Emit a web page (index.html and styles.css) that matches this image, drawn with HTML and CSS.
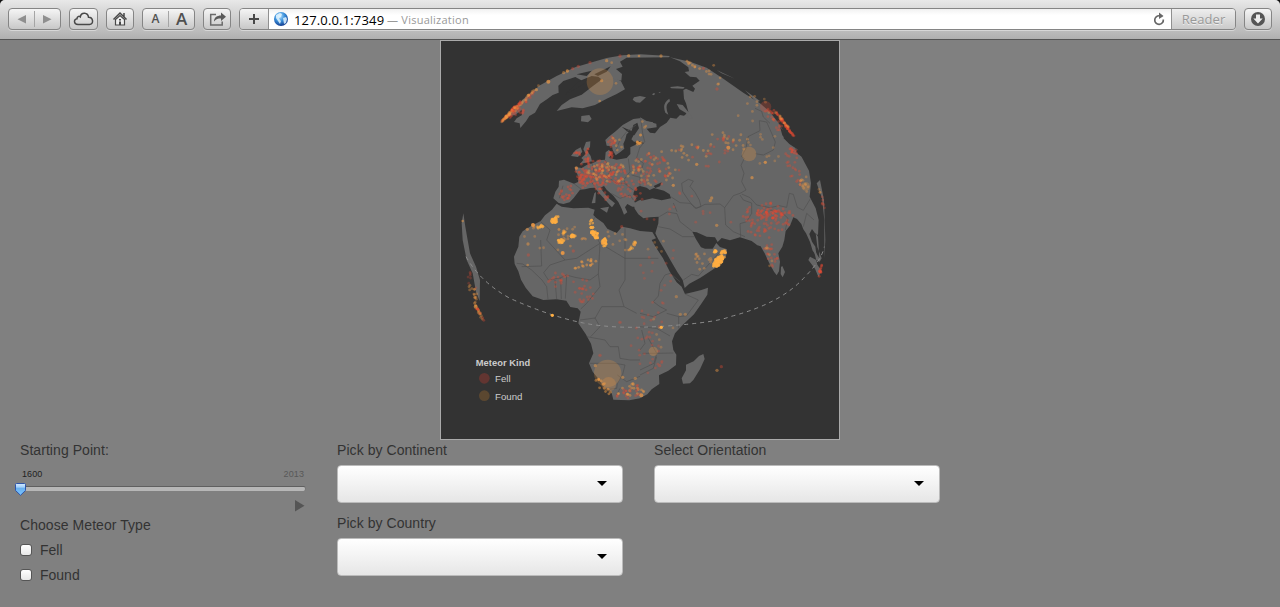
FILE: index.html
```html
<!DOCTYPE html>
<html lang="en">
<head>
<meta charset="utf-8">
<title>Visualization</title>
<link rel="stylesheet" href="styles.css">
</head>
<body>
<header class="toolbar">
  <div class="btn nav">
    <svg width="51" height="20" viewBox="0 0 51 20"><path d="M17 6v8.500L8.500 10.200z M34 6v8.500L42.500 10.200z" fill="#8f8f8f"/><path d="M25.500 2v16" stroke="#a5a5a5"/></svg>
  </div>
  <div class="btn cloud">
    <svg width="27" height="20" viewBox="0 0 27 20"><path d="M8 15.500C3.500 15.500 3.500 10 7 9.700C7 7.500 9 6.800 10.300 7.800C11.300 2.800 18 3.300 18.500 8.300C23.500 8.300 24 15.500 19.500 15.500Z" fill="none" stroke="#484848" stroke-width="1.500"/></svg>
  </div>
  <div class="btn home">
    <svg width="26" height="20" viewBox="0 0 26 20"><path d="M6.500 10.500L13 4l6.500 6.500M17 4v4" fill="none" stroke="#484848" stroke-width="1.500"/><path d="M8.500 10.500v5.500h9v-5.500L13 6.500z" fill="#eee" stroke="#484848" stroke-width="1.200"/><path d="M12 10h2v1.500h-2z M12 12.500h2v3.500h-2z" fill="#484848"/></svg>
  </div>
  <div class="btn text-size"><span class="small-a">A</span><span class="large-a">A</span></div>
  <div class="btn share">
    <svg width="26" height="20" viewBox="0 0 26 20"><path d="M12 5.500H6.700v10.500h11.500V12.500" fill="none" stroke="#6a6a6a" stroke-width="1.500"/><path d="M10 12.500C10 8.500 13 6.500 17 6.500V3.500l5 4.200-5 4.300V9.500C14 9.500 12 10 10 12.500z" fill="#5a5a5a"/></svg>
  </div>
  <div class="address">
    <div class="add"><svg width="15" height="20" viewBox="0 0 15 20"><path d="M7 5v10M2 10h10" stroke="#484848" stroke-width="2"/></svg></div>
    <div class="url">
      <svg class="globe-icon" width="16" height="16" viewBox="0 0 16 16"><defs><radialGradient id="gl" cx=".4" cy=".3" r=".7"><stop offset="0" stop-color="#bde5ff"/><stop offset=".5" stop-color="#3c92dc"/><stop offset="1" stop-color="#123e92"/></radialGradient></defs><circle cx="8" cy="8" r="7" fill="url(#gl)"/><path d="M3 4l4-2 2 1-1 3-2 1 1 2 1 1-1 3-2-3-2-3z M10 7l3-1 1 2-1 4-2 1z" fill="#e2f5ff" opacity=".85"/></svg>
      <span class="host">127.0.0.1:7349</span><span class="page-title">— Visualization</span>
      <svg class="reload" width="14" height="14" viewBox="0 0 14 14"><path d="M10.300 4.500L7.500 3.800A4.300 4.300 0 1 0 11.300 7.500" fill="none" stroke="#666" stroke-width="1.700"/><path d="M7 .5l4.500 3.500L7 7z" fill="#666"/></svg>
    </div>
    <div class="reader">Reader</div>
  </div>
  <div class="btn download">
    <svg width="26" height="20" viewBox="0 0 26 20"><circle cx="13" cy="10" r="7" fill="#555"/><path d="M11 5.500h4v4h2.700L13 14.500 8.300 9.500H11z" fill="#eee"/></svg>
  </div>
</header>
<main>
  <section class="map">
    <svg width="400" height="400" viewBox="0 0 1200 1200">
      <g class="land">
        <path d="M340 475L346 455 356 440 357 422 372 419 402 431 414 426 416 410 406 392 404 381 425 384 440 375 458 370 475 361 495 359 497 337 507 329 514 340 508 354 530 359 560 354 571 342 571 322 590 313 613 310 600 304 582 305 574 298 586 277 591 267 575 272 560 282 556 298 550 312 553 326 540 337 527 346 518 330 516 319 500 317 496 300 506 290 527 274 548 255 580 237 604 234 621 244 649 251 650 262 620 266 630 278 645 280 660 261 680 248 691 233 709 236 720 225 732 227 745 216 738 190 732 176 730 150 738 146 760 156 765 146 757 137 779 122 769 112 750 110 734 96 747 94 745 82 720 64 690 52 750 65 800 83 850 116 910 158 960 190 990 216 1015 248 1033 278 1031 295 1048 312 1072 328 1087 355 1107 392 1113 430 1109 470 1127 505 1136 540 1134 585 1124 578 1116 567 1108 582 1116 605 1126 620 1130 648 1118 632 1110 606 1098 580 1090 568 1084 552 1071 537 1060 532 1050 557 1037 573 1033 600 1027 620 1015 640 1020 665 1017 694 1010 706 1002 695 988 670 974 640 962 619 952 616 935 603 900 592 870 601 845 594 833 606 825 592 800 590 770 577 757 575 768 598 783 622 795 626 818 626 829 609 840 621 861 628 859 645 846 670 820 688 780 714 748 731 734 744 728 720 712 696 694 665 674 630 654 596 646 580 655 550 656 530 630 532 610 535 595 523 584 506 581 490 598 481 622 475 590 472 583 484 590 500 577 500 562 492 555 502 562 517 552 524 545 506 535 486 520 467 500 449 492 438 481 443 493 460 508 476 525 490 516 502 510 496 494 478 477 459 465 443 450 444 435 448 420 449 412 460 401 474 389 487 370 492 356 489Z"/>
        <path d="M350 491L365 500 400 505 445 503 464 509 460 525 468 533 490 549 502 566 530 579 546 560 570 565 600 573 637 576 648 595 635 600 647 621 669 655 690 696 710 727 725 740 735 762 760 756 784 750 804 743 802 764 785 790 762 823 728 855 705 880 696 904 700 930 709 944 708 975 685 992 657 1006 658 1032 635 1048 622 1063 600 1075 568 1081 520 1079 514 1055 490 1039 476 1018 458 995 447 970 460 940 453 911 437 882 415 850 422 815 413 805 391 801 379 782 350 778 310 780 278 769 257 743 243 719 235 694 224 672 222 650 235 620 238 590 248 574 272 559 302 543 315 526 336 509Z"/>
        <path d="M790 942L794 957 780 988 760 1020 750 1030 729 1031 725 1015 738 991 738 974 761 964 777 948Z M407 330L422 322 427 335 414 351 393 348 400 338Z M438 306L451 304 450 322 440 330 452 348 456 364 420 372 430 360 424 354 437 342 430 328Z M463 460L468 456 466 489 455 490Z M480 505L507 500 501 518Z M424 228L448 225 455 237 444 247 423 244Z M582 172L600 168 618 172 600 188 588 187 578 179Z M350 213L365 195 390 178 425 164 455 141 480 122 515 106 543 124 555 148 530 162 500 176 465 195 428 205 395 202Z M1140 420L1130 430 1146 475 1153 540 1153 655 1156 600 1152 480Z M1111 600L1118 620 1138 655 1134 590 1127 579 1132 621 1145 655 1139 665 1110 650 1105 660 1125 686 1135 710 1145 693 1132 674 1125 645Z M1027 678L1035 696 1028 712 1022 702 1023 681Z"/>
        <path d="M180 250L205 224 250 177 300 136 350 108 405 82 500 54 548 46 600 43 690 48 686 52 560 53 540 65 548 80 528 87 546 102 544 122 520 116 490 123 475 110 455 108 424 121 406 111 370 123 355 137 356 158 338 165 322 177 300 192 285 218 268 228 258 244 241 264 239 250 222 246 230 235 246 225 245 210 225 225 210 228Z"/>
        <path d="M676 218Q665 190 688 176L690 184Q672 195 685 224Z M710 192L728 195 750 222 758 235 745 234 738 219 719 208Z M600 230L612 242 640 247 632 255 607 245Z M690 141L713 139 734 142 730 146 694 145Z M830 90L885 116 845 100Z M915 151L960 183 950 187Z M636 163L642 159 646 162 640 166Z M655 158L662 155 660 159Z M70 520L76 560 90 640 108 680 120 720 119 783 108 755 98 700 80 660 68 600 65 550Z"/>
      </g>
      <g class="sea">
        <path d="M580 465Q582 442 600 438L620 443 629 450 642 444 672 452 689 463 693 475 665 481 637 475 605 482Z M641 438L665 427 660 439 646 444Z M545 260L575 273 580 255 592 248 597 265 583 286 566 278Z M391 148L412 127 445 115 430 133 375 165Z M463 103L512 79 500 95 474 108Z M410 103L455 92 440 108Z M1020 260L1042 286 1040 302 1027 286Z M1065 325L1080 336 1085 350 1070 339Z"/>
      </g>
      <g class="borders">
        <path d="M402 431L424 448M369 437L358 475M457 372L463 400 453 425 467 442M495 360L512 390 502 410 530 430 553 430 580 450M565 356L570 395 551 420 565 440M575 405L600 412 600 438M514 460L540 475 570 465 580 480M600 320L590 353 610 370 602 400M528 330L540 300 560 275 588 255M602 236L608 280 614 305 600 323M725 430L745 418 760 423 750 439 765 457 778 480 783 500 765 505 745 480 728 455 725 430M692 470L720 488 750 490 770 505 795 493 840 492 854 503 880 467 900 460 918 450 905 425 912 400 903 376 913 355 905 350 918 325 924 290 960 272 958 242 980 246 995 280 1006 306 1000 330 970 345 946 341M945 205L965 214 970 231 990 250M905 462L930 473 950 495 990 503 1018 497 1040 502 1048 460 1060 463 1072 502 1090 511 1112 475M854 503L857 555 880 575 915 590M900 465L910 480 935 489 935 520 920 545 900 551 902 591M658 530L682 516 711 521 720 545 757 574M711 515L700 489M655 560L690 567 728 590 765 590M1036 570L1044 535 1025 517 990 510M1090 560L1100 520 1122 540M730 720L755 703 775 708 800 680 840 635"/>
        <path d="M302 545L330 570 320 600 375 660 410 655 480 610 555 655V565M464 532L450 560 480 610M555 655V720L537 750 552 800 590 820M302 600L305 678 245 680M555 655H655M230 670L248 672 275 690 306 720 320 740 324 778M375 660L330 675 311 698 325 720 360 714 380 705 405 712 450 720 475 702 480 610M345 720L350 778M362 715L364 778M380 708L376 776M475 702L480 740 440 790 422 807M420 840L465 834 480 860 452 890M465 835L485 800 552 800M440 890L495 900 510 920 535 920 540 955 570 960 600 960M450 970L525 970 555 975 548 1003 532 1030 530 1045 505 1048M532 1005L560 1025 600 1009M600 820L640 830 680 810 660 800 640 785 655 768 660 730 675 705M680 820L716 830 716 865M716 830L740 827 775 780 735 762M600 860L650 865 690 888M605 870L615 910 600 930M608 940L650 940 700 939M625 895L650 940 642 970 600 990M600 1005L640 985 650 950M540 1045L530 1065M675 705L690 700 720 725"/>
      </g>
      <path class="equator" d="M78 650Q122 727 210 775Q330 829 430 849T680 858 870 830Q1025 790 1095 710Q1145 660 1153 620"/>
      <g id="meteors"></g>
      <g class="legend">
        <text class="legend-title" x="107" y="978">Meteor Kind</text>
        <circle class="fell" cx="133" cy="1015" r="16"/><text x="165" y="1025">Fell</text>
        <circle class="found" cx="133" cy="1067" r="16"/><text x="165" y="1080">Found</text>
      </g>
    </svg>
  </section>
  <section class="controls">
    <div class="col">
      <label>Starting Point:</label>
      <div class="slider">
        <div class="range"><span class="from">1600</span><span>2013</span></div>
        <div class="track"><svg class="thumb" width="11" height="13" viewBox="0 0 11 13"><defs><linearGradient id="th" x2="0" y2="1"><stop offset="0" stop-color="#d4ebff"/><stop offset=".3" stop-color="#a5d0fa"/><stop offset=".4" stop-color="#68b0f0"/><stop offset="1" stop-color="#7cc5ff"/></linearGradient></defs><path d="M.5 1.500Q.5.5 1.500.5h8Q10.500.5 10.500 1.500V7.500L5.500 12.300.5 7.500z" fill="url(#th)" stroke="#2f55a8"/></svg></div>
        <svg class="play" width="10" height="12" viewBox="0 0 10 12"><path d="M0 0v11.500L9.500 5.700z"/></svg>
      </div>
      <label>Choose Meteor Type</label>
      <div class="check"><i></i><span>Fell</span></div>
      <div class="check"><i></i><span>Found</span></div>
    </div>
    <div class="col">
      <label>Pick by Continent</label><div class="select"></div>
      <label>Pick by Country</label><div class="select"></div>
    </div>
    <div class="col">
      <label>Select Orientation</label><div class="select"></div>
    </div>
  </section>
</main>
<script src="map.js"></script>
</body>
</html>
```

FILE: styles.css
```css
* { box-sizing: border-box; }
body {
  margin: 0;
  height: 607px;
  overflow: hidden;
  background: #808080;
  color: #333;
  font: 14px/20px "Liberation Sans", Arial, sans-serif;
}
svg { display: block; }
.toolbar {
  display: flex;
  height: 40px;
  padding: 8px 8px 0;
  border-bottom: 1px solid #555;
  border-radius: 5px 5px 0 0;
  background: linear-gradient(#e8e8e8, #cfcfcf 45%, #b0b0b0);
  box-shadow: 0 -6px 0 6px #111;
  clip-path: inset(0);
}
.btn, .address { height: 22px; border: 1px solid #858585; border-radius: 4px; box-shadow: 0 1px 0 rgba(255,255,255,.4); }
.btn { background: linear-gradient(#f5f5f5, #c8c8c8); overflow: hidden; }
.nav { width: 53px; margin-right: 8px; }
.cloud { width: 29px; margin-right: 8px; }
.home { width: 28px; margin-right: 8px; }
.text-size { display: flex; width: 53px; margin-right: 8px; color: #505050; font-family: "Open Sans", sans-serif; font-weight: 600; text-align: center; }
.text-size span { flex: 1; }
.small-a { font-size: 12px; border-right: 1px solid #a5a5a5; height: 16px; margin-top: 2px; line-height: 16px; }
.large-a { font-size: 17px; line-height: 20px; }
.share { width: 28px; margin-right: 8px; }
.address { display: flex; width: 997px; margin-right: 8px; overflow: hidden; font-family: "Open Sans", "Noto Sans", sans-serif; }
.add { width: 29px; padding-left: 7px; border-right: 1px solid #909090; background: linear-gradient(#f5f5f5, #c8c8c8); }
.url { display: flex; flex: 1; align-items: center; padding: 0 5px 0 4px; background: linear-gradient(#f1f1f1, #fff 30%); }
.host { margin-left: 5px; color: #000; font-size: 13px; letter-spacing: .16px; width: 93px; padding-top: 1px; white-space: nowrap; }
.page-title { color: #999; font-size: 11px; letter-spacing: .25px; padding-top: 2px; }
.reload { margin-left: auto; }
.reader { width: 64px; border-left: 1px solid #909090; background: linear-gradient(#eee, #cacaca); color: #999; font-size: 13px; text-align: center; letter-spacing: .1px; text-shadow: 0 1px #eee; }
.download { width: 28px; }
.map { width: 400px; height: 400px; margin: 0 auto; border: 1px solid #aaa; background: #333; }
.map > svg { margin: -1px; }
.land { fill: #666; }
.sea { fill: #333; }
.borders, .equator { fill: none; }
.borders { stroke: #505050; stroke-width: 2; stroke-linejoin: round; }
.equator { stroke: #8c8c8c; stroke-width: 3; stroke-dasharray: 12 12; }
.legend text { fill: #ccc; font: 29px "Liberation Sans", Arial, sans-serif; }
.legend .legend-title { font-size: 28px; font-weight: bold; letter-spacing: .2px; }
.legend .fell { fill: #ef3b2c; opacity: .25; }
.legend .found { fill: #fe9929; opacity: .2; }
.controls { display: flex; gap: 31px; padding-left: 20px; }
.col { width: 286px; }
.col label { display: block; height: 20px; margin-bottom: 5px; letter-spacing: .06px; }
.slider { height: 50px; }
.range { display: flex; justify-content: space-between; height: 15px; padding: 0 2px; margin-top: -2px; font-size: 9px; line-height: 22px; color: #585858; }
.range span { letter-spacing: .1px; }
.range .from { color: #222; }
.track { width: 286px; height: 5px; margin-top: 8px; border-radius: 3px; border-top: 1px solid #606060; border-right: 1px solid #777; background: #b7b7b7; position: relative; }
.slider + label { margin-top: 2px; }
.thumb { position: absolute; left: -5px; top: -4px; }
.play { margin: 9px 1px 0 auto; fill: #555; }
.check { display: flex; align-items: center; height: 25px; padding-bottom: 5px; }
.check i { width: 12px; height: 12px; margin-right: 8px; border: 1px solid #555; border-radius: 3px; background: linear-gradient(#fff, #e8e8e8); }
.select { display: flex; align-items: center; justify-content: flex-end; height: 38px; margin-bottom: 10px; padding: 0 15px 2px 0; border: 1px solid #bbb; border-radius: 4px; background: linear-gradient(#fff, #e6e6e6); }
.select::after { content: ""; border: 5px solid transparent; border-top-color: #000; border-bottom: 0; }
```

FILE: map.js
```js
const layer = document.getElementById("meteors");
const colors = { fell: "#e34a33", found: "#ee9944", bright: "#ffae42" };
let seed = 7349;
const rand = () => (seed = (seed * 16807) % 2147483647) / 2147483647;

function dot(kind, x, y, r, alpha) {
  const c = document.createElementNS("http://www.w3.org/2000/svg", "circle");
  c.setAttribute("cx", x);
  c.setAttribute("cy", y);
  c.setAttribute("r", r);
  c.setAttribute("fill", colors[kind]);
  c.setAttribute("opacity", alpha);
  layer.appendChild(c);
}

// [kind, centre x, centre y, radius x, radius y, count, rotation, opacity]
const clusters = [
  ["fell", 485, 400, 78, 38, 115, 5, .42], ["found", 515, 400, 75, 30, 42, 5, .42],
  ["fell", 427, 418, 18, 28, 25, 0, .42], ["fell", 380, 460, 34, 26, 18, 0, .4],
  ["fell", 487, 460, 8, 35, 11, -42, .38], ["fell", 570, 445, 42, 32, 24, 0, .38],
  ["fell", 442, 345, 8, 26, 13, 0, .4], ["fell", 412, 338, 9, 11, 7, 0, .4],
  ["fell", 519, 300, 14, 24, 12, 35, .4], ["fell", 512, 345, 8, 10, 8, 0, .45],
  ["found", 530, 310, 18, 25, 6, 20, .4],
  ["fell", 635, 390, 60, 52, 50, 0, .38], ["found", 650, 380, 70, 58, 30, 0, .38],
  ["found", 590, 308, 14, 5, 8, 0, .5], ["found", 605, 265, 18, 22, 5, 0, .4],
  ["found", 750, 340, 75, 28, 16, -10, .42], ["fell", 770, 340, 110, 50, 14, -10, .36],
  ["found", 875, 305, 68, 42, 17, 0, .38], ["fell", 840, 310, 75, 35, 10, 0, .36],
  ["found", 825, 105, 34, 35, 8, 0, .38], ["found", 760, 75, 30, 4, 8, 25, .45],
  ["found", 980, 270, 65, 110, 18, 0, .3], ["found", 925, 200, 65, 35, 7, 0, .35],
  ["fell", 1000, 240, 14, 42, 20, -35, .36],
  ["fell", 1065, 385, 22, 60, 20, -20, .36], ["fell", 1060, 333, 15, 6, 9, 25, .5],
  ["found", 1090, 420, 14, 42, 12, -15, .35], ["fell", 985, 532, 78, 45, 62, 0, .38],
  ["fell", 970, 525, 22, 14, 18, 30, .42], ["fell", 1010, 525, 18, 13, 20, -20, .45],
  ["fell", 970, 572, 52, 25, 20, 0, .36],
  ["fell", 992, 645, 20, 38, 18, -10, .36], ["found", 990, 640, 16, 38, 6, 0, .35],
  ["bright", 343, 539, 15, 10, 28, -25, .75], ["bright", 306, 560, 14, 5, 8, -10, .7],
  ["bright", 399, 588, 7, 5, 12, 0, .75], ["bright", 370, 577, 7, 4, 7, 0, .5],
  ["bright", 455, 553, 5, 14, 12, 0, .65], ["bright", 465, 583, 9, 14, 28, -40, .8],
  ["bright", 362, 604, 10, 7, 14, -20, .7], ["bright", 494, 608, 8, 12, 20, 0, .8],
  ["bright", 578, 617, 8, 20, 12, 20, .5], ["found", 345, 590, 95, 42, 24, 0, .35],
  ["found", 535, 600, 65, 35, 13, 0, .35], ["found", 435, 672, 35, 11, 16, -20, .5],
  ["bright", 834, 665, 10, 20, 70, 40, .75], ["bright", 850, 642, 8, 12, 16, 10, .6],
  ["bright", 825, 634, 4, 3, 8, 0, .7], ["found", 790, 660, 32, 30, 15, 0, .38],
  ["fell", 348, 718, 42, 22, 16, 0, .36], ["fell", 430, 748, 35, 50, 23, 0, .34],
  ["found", 490, 1040, 32, 12, 13, 45, .5], ["found", 575, 1052, 42, 22, 20, -15, .46],
  ["fell", 570, 1058, 44, 20, 18, -15, .36], ["fell", 625, 900, 55, 100, 34, 0, .3],
  ["fell", 660, 700, 85, 95, 16, 0, .28], ["found", 655, 900, 50, 90, 6, 0, .3],
  ["found", 640, 620, 60, 25, 6, 0, .3], ["fell", 740, 510, 190, 60, 16, 0, .3],
  ["fell", 250, 190, 70, 4, 26, -46, .3], ["found", 245, 190, 80, 3, 22, -46, .35],
  ["fell", 213, 215, 45, 4, 42, -46, .42], ["found", 208, 221, 38, 3, 30, -46, .4],
  ["fell", 235, 215, 20, 12, 10, -20, .34],
  ["found", 99, 765, 12, 35, 16, -15, .38], ["fell", 93, 720, 10, 48, 7, -15, .25],
  ["found", 118, 820, 3, 27, 13, -28, .35], ["fell", 121, 825, 3, 24, 8, -28, .36],
  ["fell", 1032, 249, 3, 55, 50, -37, .42], ["found", 1022, 235, 3, 40, 11, -40, .36],
  ["fell", 1141, 693, 3, 19, 12, 15, .45], ["fell", 1143, 470, 4, 43, 6, -15, .32],
  ["found", 1140, 462, 3, 30, 3, -15, .3]
];
for (const [kind, cx, cy, rx, ry, count, angle, alpha] of clusters) {
  const a = angle * Math.PI / 180;
  for (let i = 0; i < count; i++) {
    const t = rand() * Math.PI * 2, d = Math.sqrt(rand());
    const u = Math.cos(t) * d * rx, v = Math.sin(t) * d * ry;
    dot(kind, cx + u * Math.cos(a) - v * Math.sin(a), cy + u * Math.sin(a) + v * Math.cos(a), 4.2, alpha);
  }
}

const singles = [
  [325, 125, 6, .7], [371, 98, 5, .45], [382, 93, 5, .65], [500, 62, 5, .5], [566, 47, 5, .5],
  [597, 48, 4, .5], [663, 48, 5, .5], [289, 149, 5, .6], [479, 183, 4, .5], [485, 122, 5, .5],
  [528, 130, 4, .4], [515, 68, 4, .4], [265, 166, 5, .7], [279, 555, 6, .9], [262, 568, 5, .55],
  [264, 612, 5, .5], [263, 675, 4, .5], [368, 639, 6, .9], [936, 413, 5, .6], [976, 367, 5, .7],
  [865, 323, 6, .7], [700, 436, 5, .6], [770, 373, 5, .6], [830, 556, 5, .5], [811, 482, 5, .5],
  [815, 474, 5, .5], [409, 384, 5, .6], [831, 991, 5, .45], [721, 823, 5, .4], [736, 823, 5, .4],
  [709, 770, 5, .4], [466, 977, 5, .5], [68, 543, 4, .5], [107, 800, 6, .6], [548, 1012, 5, .5],
  [586, 1015, 5, .45], [604, 1066, 6, .7]
];
for (const [x, y, r, alpha] of singles) dot("found", x, y, r, alpha);
const falls = [[415, 79], [398, 86], [450, 68], [540, 48], [844, 980], [659, 977], [540, 847], [480, 946], [790, 85], [831, 147], [265, 645], [400, 633], [545, 560]];
for (const [x, y] of falls) dot("fell", x, y, 5, .38);

dot("found", 480, 125, 40, .24);
dot("found", 503, 1000, 41, .24);
dot("found", 506, 1033, 22, .25);
dot("found", 927, 342, 22, .28);
dot("found", 640, 934, 14, .32);
dot("found", 1097, 439, 13, .28);
dot("fell", 977, 200, 17, .25);
dot("bright", 337, 826, 5, 1);
dot("bright", 664, 862, 5, 1);
```
